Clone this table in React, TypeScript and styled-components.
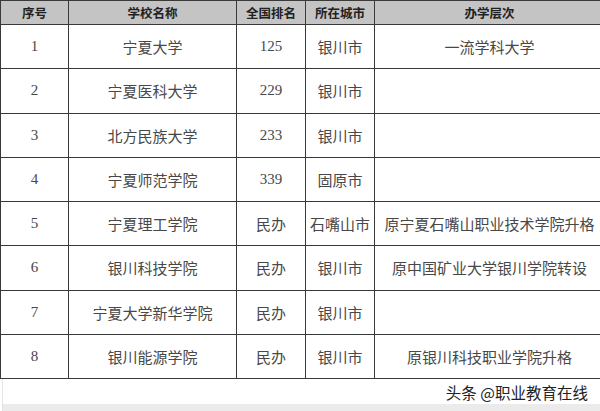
import React from 'react';
import styled, { createGlobalStyle } from 'styled-components';

const GlobalStyle = createGlobalStyle`
  html, body {
    margin: 0;
    padding: 0;
    background: #fff;
  }
  body {
    width: 600px;
    height: 411px;
    overflow: hidden;
    font-family: "Liberation Serif", "Noto Sans CJK SC", serif;
  }
`;

const Page = styled.div`
  width: 600px;
  height: 411px;
  display: flex;
  flex-direction: column;
  background: #fff;
`;

const Table = styled.table`
  width: 599px;
  border-collapse: collapse;
  table-layout: fixed;
  margin-left: 0;
`;

const HeadCell = styled.th<{ w: number }>`
  width: ${({ w }) => w}px;
  height: 23px;
  padding: 0;
  background: #c4c4c4;
  border: 1px solid #3a3a3a;
  font-family: "Liberation Serif", "Noto Sans CJK SC", serif;
  font-weight: 700;
  font-size: 12.5px;
  color: #222;
  text-align: center;
  vertical-align: middle;
`;

const Cell = styled.td`
  height: 43.25px;
  padding: 0;
  border: 1px solid #3a3a3a;
  font-family: "Liberation Serif", "Noto Sans CJK SC", serif;
  font-size: 15px;
  color: #484848;
  text-align: center;
  vertical-align: middle;
  white-space: nowrap;
`;

const Footer = styled.div`
  flex: 1;
  display: flex;
  flex-direction: column;
  border-left: 1px solid #e4e4e4;
  margin-left: 2px;
`;

const Watermark = styled.div`
  flex: 1;
  display: flex;
  align-items: center;
  justify-content: flex-end;
  padding-right: 12px;
  font-family: "Noto Sans CJK SC", sans-serif;
  font-size: 15.5px;
  color: #222;
`;

const BottomStrip = styled.div`
  height: 7px;
  background: #ebebeb;
`;

const columns = [
  { title: '序号', w: 67 },
  { title: '学校名称', w: 167 },
  { title: '全国排名', w: 68 },
  { title: '所在城市', w: 68 },
  { title: '办学层次', w: 229 },
];

const rows = [
  ['1', '宁夏大学', '125', '银川市', '一流学科大学'],
  ['2', '宁夏医科大学', '229', '银川市', ''],
  ['3', '北方民族大学', '233', '银川市', ''],
  ['4', '宁夏师范学院', '339', '固原市', ''],
  ['5', '宁夏理工学院', '民办', '石嘴山市', '原宁夏石嘴山职业技术学院升格'],
  ['6', '银川科技学院', '民办', '银川市', '原中国矿业大学银川学院转设'],
  ['7', '宁夏大学新华学院', '民办', '银川市', ''],
  ['8', '银川能源学院', '民办', '银川市', '原银川科技职业学院升格'],
];

export default function App() {
  return (
    <Page>
      <GlobalStyle />
      <Table>
        <thead>
          <tr>
            {columns.map((c) => (
              <HeadCell key={c.title} w={c.w}>
                {c.title}
              </HeadCell>
            ))}
          </tr>
        </thead>
        <tbody>
          {rows.map((r) => (
            <tr key={r[0]}>
              {r.map((v, i) => (
                <Cell key={i}>{v}</Cell>
              ))}
            </tr>
          ))}
        </tbody>
      </Table>
      <Footer>
        <Watermark>头条 @职业教育在线</Watermark>
        <BottomStrip />
      </Footer>
    </Page>
  );
}
